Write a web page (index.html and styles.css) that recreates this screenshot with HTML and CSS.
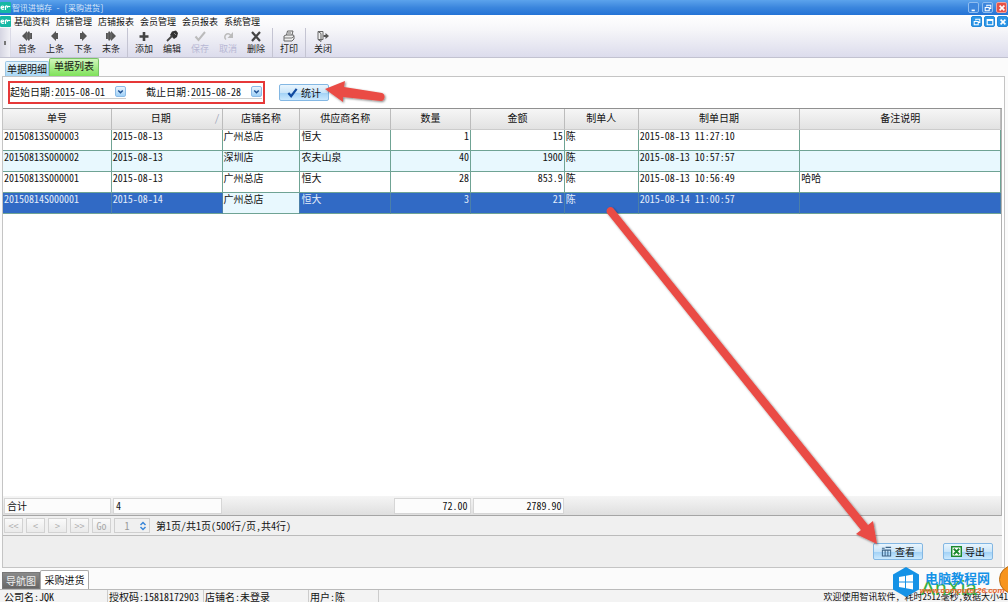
FILE: index.html
```html
<!DOCTYPE html>
<html lang="zh-CN">
<head>
<meta charset="utf-8">
<title>智讯进销存 - [采购进货]</title>
<link rel="stylesheet" href="styles.css">
</head>
<body>
<svg class="defs" width="0" height="0" aria-hidden="true">
  <symbol id="logo" viewBox="0 0 11 11"><rect width="11" height="11" rx="1" fill="#16b8a4"/><path d="M1 5.500h3M1 5.500c0-2 3-2 3 0M1 5.500c0 2 2 2 3 1.500M5.500 8V4.500c1-1 2-.5 2 .5 1-1 2-1 2.500 0" fill="none" stroke="#fff" stroke-width="1.200"/></symbol>
  <symbol id="restore" viewBox="0 0 10 10"><path d="M3.500 3V1.500h5v4H7M1.500 4.500h5v4h-5z" fill="none" stroke="#fff" stroke-width="1.300"/></symbol>
  <symbol id="cross" viewBox="0 0 10 10"><path d="M2 2l6 6M8 2L2 8" stroke="currentColor" stroke-width="2"/></symbol>
</svg>
<header>
  <div class="titlebar">
    <svg class="logo"><use href="#logo"/></svg>
    <h1>智讯进销存 - [采购进货]</h1>
    <div class="win-buttons">
      <button class="win" aria-label="最小化"><svg viewBox="0 0 10 10"><path d="M2 8h4" stroke="#fff" stroke-width="2"/></svg></button>
      <button class="win" aria-label="还原"><svg><use href="#restore"/></svg></button>
      <button class="win close" aria-label="关闭窗口"><svg><use href="#cross"/></svg></button>
    </div>
  </div>
  <div class="commands">
    <nav class="menubar">
      <svg class="logo"><use href="#logo"/></svg>
      <button>基础资料</button><button>店铺管理</button><button>店铺报表</button><button>会员管理</button><button>会员报表</button><button>系统管理</button>
      <div class="win-buttons child">
        <button class="win" aria-label="还原子窗口"><svg><use href="#restore"/></svg></button>
        <button class="win" aria-label="最大化子窗口"><svg viewBox="0 0 10 10"><path d="M1.500 2h7v6.500h-7zM1.500 3h7" fill="none" stroke="#fff" stroke-width="1.400"/></svg></button>
        <button class="win" aria-label="关闭子窗口"><svg><use href="#cross"/></svg></button>
      </div>
    </nav>
    <div class="toolbar">
      <span class="grip"></span>
      <div class="group">
        <button><svg viewBox="0 0 12 12"><path d="M1 6l5-5v2l2-2 1 2h2v6H9l-1 2-2-2v2z" fill="#555"/><path d="M6 3v6M9 3v6" stroke="#888" stroke-width=".6"/></svg>首条</button>
        <button><svg viewBox="0 0 12 12"><path d="M2 6l5-5v2h2v6H7v2z" fill="#555"/></svg>上条</button>
        <button><svg viewBox="0 0 12 12"><path d="M10 6L5 1v2H3v6h2v2z" fill="#555"/></svg>下条</button>
        <button><svg viewBox="0 0 12 12"><path d="M11 6L6 1v2L4 1 3 3H1v6h2l1 2 2-2v2z" fill="#555"/><path d="M6 3v6M3 3v6" stroke="#888" stroke-width=".6"/></svg>末条</button>
      </div>
      <div class="group">
        <button><svg viewBox="0 0 12 12"><path d="M6 2v9M1.500 6.500h9" stroke="#444" stroke-width="2.600"/></svg>添加</button>
        <button><svg viewBox="0 0 12 12"><path d="M6 1.500L10 .5l2 2.500-1 4L8 9 4 5z" fill="#333"/><path d="M6.500 5.500L1 11" stroke="#444" stroke-width="1.800"/><path d="M8 3l2 2" stroke="#888"/></svg>编辑</button>
        <button disabled><svg viewBox="0 0 12 12"><path d="M1.500 6.500L4.500 10 11 2" fill="none" stroke="#bbb" stroke-width="2"/></svg>保存</button>
        <button disabled><svg viewBox="0 0 12 12"><path d="M4 9.500A3.200 3.200 0 1 1 8.500 5" fill="none" stroke="#bbb" stroke-width="1.600"/><path d="M11 2v6H5.500z" fill="#bbb"/></svg>取消</button>
        <button><svg viewBox="0 0 12 12"><path d="M2 2l8 9M10 2l-8 9" stroke="#444" stroke-width="2.200"/></svg>删除</button>
      </div>
      <div class="group">
        <button><svg viewBox="0 0 12 12"><path d="M3.500 5l1-4h5.500l-1 4M1 6l2-1h7.500L11 6v3l-2 2H1z" fill="#eee" stroke="#666"/><path d="M1 8h8l2-2M5 3h3" fill="none" stroke="#777"/></svg>打印</button>
      </div>
      <div class="group">
        <button><svg viewBox="0 0 12 12"><path d="M1 1.500h5v8H1zM1 1.500l3 2v8l-3-2" fill="#eee" stroke="#666"/><path d="M6.500 5h2V3L12 6 8.500 9V7h-2z" fill="#555"/></svg>关闭</button>
      </div>
    </div>
  </div>
</header>
<main>
  <div class="tabs" role="tablist">
    <button role="tab" aria-selected="false">单据明细</button>
    <button role="tab" aria-selected="true" class="active">单据列表</button>
  </div>
  <section class="pane">
    <form class="filter">
      <div class="dates">
        <label for="from">起始日期:</label>
        <span class="date"><input id="from" type="text" value="2015-08-01"><button type="button" aria-label="选择起始日期"><svg viewBox="0 0 10 10"><path d="M2.500 4L5 6.500 7.500 4" fill="none" stroke="#1c4f93" stroke-width="1.600"/></svg></button></span>
        <label for="to" class="second">截止日期:</label>
        <span class="date"><input id="to" type="text" value="2015-08-28"><button type="button" aria-label="选择截止日期"><svg viewBox="0 0 10 10"><path d="M2.500 4L5 6.500 7.500 4" fill="none" stroke="#1c4f93" stroke-width="1.600"/></svg></button></span>
      </div>
      <button type="button" class="blue"><svg viewBox="0 0 12 12"><path d="M1.500 6.500l3 3.500L10.500 2" fill="none" stroke="#104aa0" stroke-width="2.400"/></svg>统计</button>
    </form>
    <div class="grid">
      <table>
        <colgroup><col class="c1"><col class="c2"><col class="c3"><col class="c4"><col class="c5"><col class="c6"><col class="c7"><col class="c8"><col class="c9"></colgroup>
        <thead><tr><th>单号</th><th class="sorted">日期<span>∕</span></th><th>店铺名称</th><th>供应商名称</th><th>数量</th><th>金额</th><th>制单人</th><th>制单日期</th><th>备注说明</th></tr></thead>
        <tbody>
          <tr><td>20150813S000003</td><td>2015-08-13</td><td>广州总店</td><td>恒大</td><td class="num">1</td><td class="num">15</td><td>陈</td><td>2015-08-13 11:27:10</td><td></td></tr>
          <tr><td>20150813S000002</td><td>2015-08-13</td><td>深圳店</td><td>农夫山泉</td><td class="num">40</td><td class="num">1900</td><td>陈</td><td>2015-08-13 10:57:57</td><td></td></tr>
          <tr><td>20150813S000001</td><td>2015-08-13</td><td>广州总店</td><td>恒大</td><td class="num">28</td><td class="num">853.9</td><td>陈</td><td>2015-08-13 10:56:49</td><td>哈哈</td></tr>
          <tr class="selected"><td>20150814S000001</td><td>2015-08-14</td><td class="focus">广州总店</td><td>恒大</td><td class="num">3</td><td class="num">21</td><td>陈</td><td>2015-08-14 11:00:57</td><td></td></tr>
        </tbody>
      </table>
      <div class="totals"><span>合计</span><span>4</span><i></i><i></i><span class="num">72.00</span><span class="num">2789.90</span></div>
    </div>
    <div class="pager">
      <button disabled>&lt;&lt;</button><button disabled>&lt;</button><button disabled>&gt;</button><button disabled>&gt;&gt;</button><button disabled>Go</button>
      <span class="spin"><input type="text" value="1" aria-label="页码" disabled><svg viewBox="0 0 8 10"><path d="M1.500 4L4 1.500 6.500 4M1.500 6L4 8.500 6.500 6" fill="none" stroke="#3a86d8" stroke-width="1.500"/></svg></span>
      <p>第1页/共1页(500行/页,共4行)</p>
    </div>
    <div class="actions">
      <button class="blue"><svg viewBox="0 0 12 12"><path d="M1 2.500h3M5 1.500h6M1.500 4.500h9v6.500h-9zM4.500 4.500V11M7.500 4.500V11M1 4.500h10" fill="none" stroke="#3d6386" stroke-width="1.100"/></svg>查看</button>
      <button class="blue"><svg viewBox="0 0 12 12"><rect x=".8" y=".8" width="10.400" height="10.400" fill="#fff" stroke="#1c8a2d" stroke-width="1.600"/><path d="M3 3l6 6M9 3L3 9" stroke="#1c8a2d" stroke-width="2"/></svg>导出</button>
    </div>
  </section>
</main>
<footer>
  <div class="windows"><button class="dark">导航图</button><button class="current">采购进货</button></div>
  <div class="status"><span class="s1">公司名:JQK</span><span class="s2">授权码:15818172903</span><span class="s3">店铺名:未登录</span><span class="s4">用户:陈</span><span class="s5">欢迎使用智讯软件, 耗时2512毫秒,数据大小41</span></div>
</footer>
<svg class="arrows" viewBox="0 0 1008 602" aria-hidden="true">
  <defs><filter id="shade" x="-10%" y="-10%" width="120%" height="120%"><feDropShadow dx="1" dy="1" stdDeviation="1" flood-opacity=".5"/></filter></defs>
  <g fill="#ea4b45" filter="url(#shade)">
    <path d="M325 89l20-8-1 6 38 6c4 1 3 8-1 8l-38-4v5z"/>
    <path d="M607 213c-2-4 3-8 6-5l255 317 5-4 4 23-21-10 5-4z"/>
  </g>
</svg>
<div class="watermark" aria-hidden="true">
  <svg class="hex" viewBox="0 0 26 30"><path d="M13 0l13 7.500v15L13 30 0 22.500v-15z" fill="#1592e6"/><path d="M6 10l6-1v5.500H6zM13 8.800l7-1.200v6.900h-7zM6 15.500h6V21l-6-1zM13 15.500h7v6.900l-7-1.200z" fill="#fff"/></svg>
  <div class="brand"><span>AnXia</span><b>电脑教程网</b><em>www.computer26.com</em></div>
  <i class="ball"></i>
</div>
</body>
</html>
```
FILE: styles.css
```css
* { box-sizing: border-box; }
body {
  margin: 0;
  height: 100vh;
  overflow: hidden;
  position: relative;
  display: flex;
  flex-direction: column;
  background: #fbfbfb;
  color: #111;
  font: 10px/12px "Noto Sans CJK SC", "Liberation Sans", sans-serif;
  font-feature-settings: "hwid";
}
button, input { font: inherit; font-feature-settings: inherit; color: inherit; padding: 0; margin: 0; border: 0; background: none; white-space: nowrap; }
.defs { position: absolute; }
.logo { width: 11px; height: 11px; flex: none; }

.titlebar { display: flex; align-items: center; gap: 1px; height: 15px; padding-right: 1px; background: linear-gradient(#5ca3ec, #3b86dd 50%, #2473d6); }
.titlebar h1 { margin: 0; font-size: 8px; font-weight: 400; color: #d9e9fa; flex: 1; }
.win-buttons { display: flex; gap: 3px; }
.win { display: grid; place-items: center; width: 11px; height: 11px; border: 1px solid #8fbdf0; border-radius: 2px; background: #3d86dd; color: #fff; }
.win svg { width: 8px; height: 8px; }
.win.close { background: #e65247; border-color: #f0a49e; }
.commands { background: linear-gradient(#fff, #f6f6f9 35%, #dcdcec); border-bottom: 1px solid #c2c2d0; }
.menubar { display: flex; align-items: center; height: 13px; font-size: 9px; }
.menubar > button { width: 42px; text-align: center; }
.child { margin-left: auto; gap: 2px; }
.child .win { background: #2b95e6; border-color: #2287d8; }

.toolbar { display: flex; height: 29px; }
.grip { width: 11px; background: linear-gradient(90deg, #d5d5e2, #f1f1f6); border-right: 1px solid #dadae6; display: grid; place-items: center; }
.grip::after { content: ""; width: 2px; height: 4px; background: #777; }
.group { display: flex; padding: 0 2px; }
.group + .group { border-left: 1px solid #c4c4d2; }
.group:last-child { padding-left: 3px; }
.toolbar button { width: 28px; display: flex; flex-direction: column; align-items: center; gap: 1px; padding-top: 2px; font-size: 9px; line-height: 12px; color: #222; }
.toolbar svg { width: 12px; height: 12px; flex: none; }
.toolbar button:disabled { color: #b7b7d4; }

main { flex: 1; display: flex; flex-direction: column; min-height: 0; }
.tabs { display: flex; align-items: flex-end; height: 18px; padding-left: 5px; }
.tabs button { height: 15px; width: 44px; border: 1px solid #9cc6e4; border-bottom: 0; border-radius: 2px 2px 0 0; background: linear-gradient(#e6f5fe, #a8d7f5); }
.tabs .active { height: 18px; width: 50px; padding-bottom: 3px; border-color: #79c467; background: linear-gradient(#d0f6bb, #7fe25a); }
.pane { flex: 1; display: flex; flex-direction: column; margin: 0 3px 2px 2px; padding: 0 2px 0 0; border: 1px solid #c4c4c4; background: #fff; min-height: 0; }
.filter { display: flex; align-items: center; gap: 14px; height: 31px; padding: 0 0 0 5px; }
.dates { display: flex; align-items: center; height: 23px; width: 257px; padding-bottom: 2px; border: 2px solid #e63838; }
.dates .second { margin-left: 20px; }
.date { display: flex; align-items: center; width: 71px; border-bottom: 1px solid #ccc; }
.date input { flex: 1; min-width: 0; width: 58px; height: 13px; }
.date button { width: 11px; height: 11px; border: 1px solid #8cbce8; border-radius: 2px; background: linear-gradient(#e9f5fe, #9fd0f7); display: grid; place-items: center; }
.date button svg { width: 9px; height: 9px; }
.blue { display: flex; align-items: center; justify-content: center; gap: 3px; width: 50px; height: 17px; border: 1px solid #83b7e3; border-radius: 2px; background: linear-gradient(#e9f5fd, #cae5f9 50%, #a3d2f6 55%, #cbe9fe); }
.blue svg { width: 11px; height: 11px; }

.grid { flex: 1; display: flex; flex-direction: column; border-top: 1px solid #909090; border-right: 1px solid #b0b0b0; min-height: 0; }
table { width: 100%; table-layout: fixed; border-collapse: separate; border-spacing: 0; }
.c1 { width: 10.900%; } .c2 { width: 11.100%; } .c3 { width: 7.800%; }
.c4 { width: 9.100%; } .c5 { width: 8%; } .c6 { width: 9.400%; }
.c7 { width: 7.400%; } .c8 { width: 16.200%; } .c9 { width: 20.100%; }
th { height: 21px; padding: 0 0 2px; font-weight: 400; text-align: center; background: linear-gradient(#f6f6f6, #e2e2e2); border-right: 1px solid #bcbcbc; border-bottom: 1px solid #ccc; }
.sorted { position: relative; padding-right: 12px; }
.sorted span { position: absolute; right: 2px; color: #9aa3b8; }
td { height: 21px; padding: 0 1px; vertical-align: top; line-height: 12px; white-space: nowrap; border-right: 1px solid #6fa394; border-bottom: 1px solid #6fa394; }
tbody tr:nth-child(2) td { background: #e8f8fe; }
.selected td { background: #316ac5; color: #e4edfa; border-right-color: #4b7fa8; }
.selected td.focus { background: #e8f8fe; color: #111; }
.num { text-align: right; }
.totals { display: grid; grid-template-columns: 109fr 111fr 78fr 92fr 79fr 94fr 436fr; height: 20px; margin-top: auto; padding: 2px 0; background: linear-gradient(#f5f5f5, #dfdfdf); border-bottom: 1px solid #a5a5a5; }
.totals span { margin: 0 1px; padding: 0 2px; line-height: 14px; border: 1px solid #d6d6d6; background: #fcfcfc; }
.pager { display: flex; align-items: center; gap: 3px; height: 20px; padding-left: 1px; background: #f0f0f0; border-bottom: 1px solid #bbb; }
.pager button { width: 19px; height: 15px; border: 1px solid #d2d2d2; color: #aaa; background: linear-gradient(#fafafa, #eaeaea); }
.spin { display: flex; align-items: center; width: 36px; height: 15px; border: 1px solid #cfcfcf; color: #999; }
.spin input { flex: 1; min-width: 0; width: 20px; height: 13px; text-align: center; }
.spin svg { width: 8px; height: 10px; margin-right: 2px; }
.pager p { margin: 0 0 0 3px; }
.actions { display: flex; justify-content: flex-end; align-items: center; gap: 20px; height: 31px; padding-right: 9px; background: #eee; }

.windows { display: flex; align-items: flex-end; height: 20px; padding-left: 2px; border-bottom: 1px solid #bbb; }
.windows button { height: 17px; }
.windows .dark { width: 38px; background: linear-gradient(#8a8a8a, #666); color: #eee; border: 1px solid #777; }
.windows .current { width: 49px; height: 19px; border: 1px solid #aaa; border-bottom: 0; border-radius: 2px 2px 0 0; background: #fff; }
.status { display: flex; height: 12px; padding-left: 3px; overflow: hidden; background: #f3f3f3; line-height: 14px; }
.status span { white-space: nowrap; border-left: 1px solid #ccc; padding-left: 1px; }
.status .s1 { width: 104px; border: 0; }
.status .s2 { width: 96px; }
.status .s3 { width: 105px; }
.status .s4 { width: 71px; border-right: 1px solid #ccc; }
.status .s5 { margin-left: auto; border: 0; font-size: 9px; }

.arrows { position: absolute; inset: 0; width: 100%; height: 100%; pointer-events: none; }
.watermark { position: absolute; right: 0; bottom: 0; width: 115px; height: 36px; overflow: hidden; pointer-events: none; }
.hex { position: absolute; left: 0; top: 1px; width: 26px; height: 30px; }
.brand { position: absolute; left: 32px; top: 4px; white-space: nowrap; }
.brand b { position: relative; display: block; color: #1592e6; font-size: 13px; line-height: 16px; }
.brand em { position: absolute; left: -5px; top: 16px; color: #f0692c; font: italic 700 8px/10px "Liberation Sans", sans-serif; font-feature-settings: normal; }
.brand span { position: absolute; left: -4px; top: 8px; color: #35b044; font: 21px/20px "Liberation Sans", sans-serif; font-feature-settings: normal; }
.ball { position: absolute; right: -20px; top: -1px; width: 29px; height: 29px; border-radius: 50%; background: #f7941d; border: 1px solid #b56b18; }
```
